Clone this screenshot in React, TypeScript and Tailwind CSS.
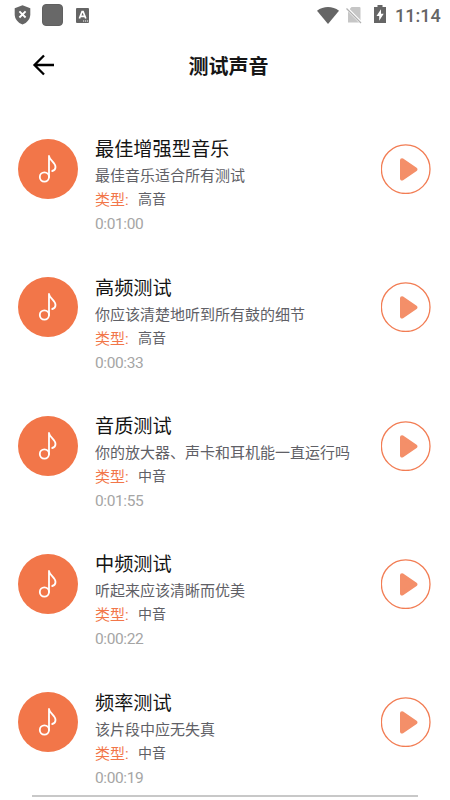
const TRACKS = [
  { title: '最佳增强型音乐', desc: '最佳音乐适合所有测试', type: '高音', time: '0:01:00' },
  { title: '高频测试', desc: '你应该清楚地听到所有鼓的细节', type: '高音', time: '0:00:33' },
  { title: '音质测试', desc: '你的放大器、声卡和耳机能一直运行吗', type: '中音', time: '0:01:55' },
  { title: '中频测试', desc: '听起来应该清晰而优美', type: '中音', time: '0:00:22' },
  { title: '频率测试', desc: '该片段中应无失真', type: '中音', time: '0:00:19' },
];

function StatusBar() {
  return (
    <div className="flex h-[30px] shrink-0 items-center pl-[14px] pr-[10px] text-[#656565]">
      <svg className="h-5 w-[17px]" viewBox="0 0 17 20" fill="none">
        <path d="M8.5.3 16.300 3.300v5.900c0 4.700-3.300 8.800-7.800 10.200C4 18 .7 13.900.7 9.200V3.300Z" fill="currentColor" />
        <path d="m5.400 6.300 6.200 6.200m0-6.200-6.200 6.200" stroke="#fff" strokeWidth="1.900" />
      </svg>
      <div className="ml-[11px] h-[22px] w-[21px] rounded-[4px] border border-[#606060] bg-[#686868]" />
      <svg className="ml-[13px] h-[15px] w-[13px]" viewBox="0 0 13 15">
        <rect width="13" height="15" rx="1" fill="currentColor" />
        <path d="m3.400 10.500 2.700-7h1l2.700 7M4.500 8.300h4.200" stroke="#fff" strokeWidth="1.700" fill="none" />
        <path d="M7 13h1.200M9 13h1.200M11 13h1.200" stroke="#fff" strokeWidth="1" />
      </svg>
      <svg className="ml-auto h-[17px] w-[22px]" viewBox="0 0 22 17">
        <path d="M0 3.800C6.500-1.200 15.500-1.200 22 3.800L11 17Z" fill="currentColor" />
      </svg>
      <svg className="ml-[7px] h-[18px] w-4" viewBox="0 0 16 18">
        <path d="M5.500 1H13.500a1 1 0 0 1 1 1v14.500H2V5Z" fill="#c6c6c6" />
        <path d="M0 1.500 15.500 17" stroke="#fff" strokeWidth="3" />
        <path d="M.5 2.500 15 17" stroke="#b0b0b0" strokeWidth="1.300" />
      </svg>
      <svg className="ml-[12px] mb-[2px] h-[18px] w-3" viewBox="0 0 12 19" preserveAspectRatio="none">
        <path d="M3.500 0h5v2H12v17H0V2h3.500Z" fill="currentColor" />
        <path d="M7 4.500 2.500 11.500H5.200V16.500L9.700 9.300H7Z" fill="#fff" />
      </svg>
      <span className="ml-[9px] w-[45px] whitespace-nowrap pt-px font-['Roboto',sans-serif] text-[18px] font-medium leading-[30px]">
        11:14
      </span>
    </div>
  );
}

function NoteBadge() {
  return (
    <div className="mt-[9px] h-[60px] w-[60px] shrink-0 rounded-full bg-[#f27649]">
      <svg className="h-[60px] w-[60px]" viewBox="0 0 60 60" fill="none" stroke="#fff">
        <circle cx="26.400" cy="38" r="4.600" strokeWidth="1.800" />
        <path d="M31 38V17C31.500 21.300 37.500 23.300 37.500 28C37.500 30 36.300 31.500 34.200 32" strokeWidth="1.800" strokeLinejoin="round" strokeLinecap="round" />
      </svg>
    </div>
  );
}

function PlayButton() {
  return (
    <button className="mt-[14px] h-[50px] w-[50px] shrink-0" aria-label="播放">
      <svg className="h-[50px] w-[50px]" viewBox="0 0 50 50">
        <circle cx="24.700" cy="25.200" r="24.300" fill="none" stroke="#f27d54" strokeWidth="1.300" />
        <path
          d="M21 16.200 34.500 25.300 21 34.500Z"
          fill="#f48f69"
          stroke="#f48f69"
          strokeWidth="4"
          strokeLinejoin="round"
        />
      </svg>
    </button>
  );
}

export default function App() {
  return (
    <div className="flex h-[800px] w-[450px] flex-col overflow-hidden bg-white font-['Roboto','Noto_Sans_CJK_SC',sans-serif]">
      <StatusBar />
      <header className="grid h-[70px] shrink-0 grid-cols-[1fr_auto_1fr] items-center pl-[32px] pr-[25px]">
        <svg className="h-6 w-6" viewBox="0 0 24 24" fill="none" stroke="#000" strokeWidth="2.300">
          <path d="M22 12H3M12 2.500 2.500 12l9.500 9.500" />
        </svg>
        <h1 className="pt-[4px] text-[20px] font-bold leading-[30px] text-[#161616]">测试声音</h1>
      </header>

      <main className="min-h-0 flex-1 overflow-hidden pt-[30px]">
        {TRACKS.map((t) => (
          <div key={t.title} className="flex h-[138.300px] pl-[18px] pr-[19px]">
            <NoteBadge />
            <div className="ml-[17px] flex-1 whitespace-nowrap pt-[6.400px]">
              <h2 className="text-[19.200px] leading-[27px] text-[#141414]">{t.title}</h2>
              <p className="text-[15px] leading-[27px] text-[#606066]">{t.desc}</p>
              <div className="flex h-[21px] leading-[21px]">
                <span className="w-[43px] text-[15px] text-[#f27649]">类型:</span>
                <span className="text-[14px] leading-[19px] text-[#606066]">{t.type}</span>
              </div>
              <p className="text-[15.500px] leading-[27px] tracking-[-0.4px] text-[#a5a5a5]">{t.time}</p>
            </div>
            <PlayButton />
          </div>
        ))}
      </main>
      <div className="mx-[32px] mb-[3px] h-[2px] shrink-0 bg-[#c8c8c8]" />
    </div>
  );
}
